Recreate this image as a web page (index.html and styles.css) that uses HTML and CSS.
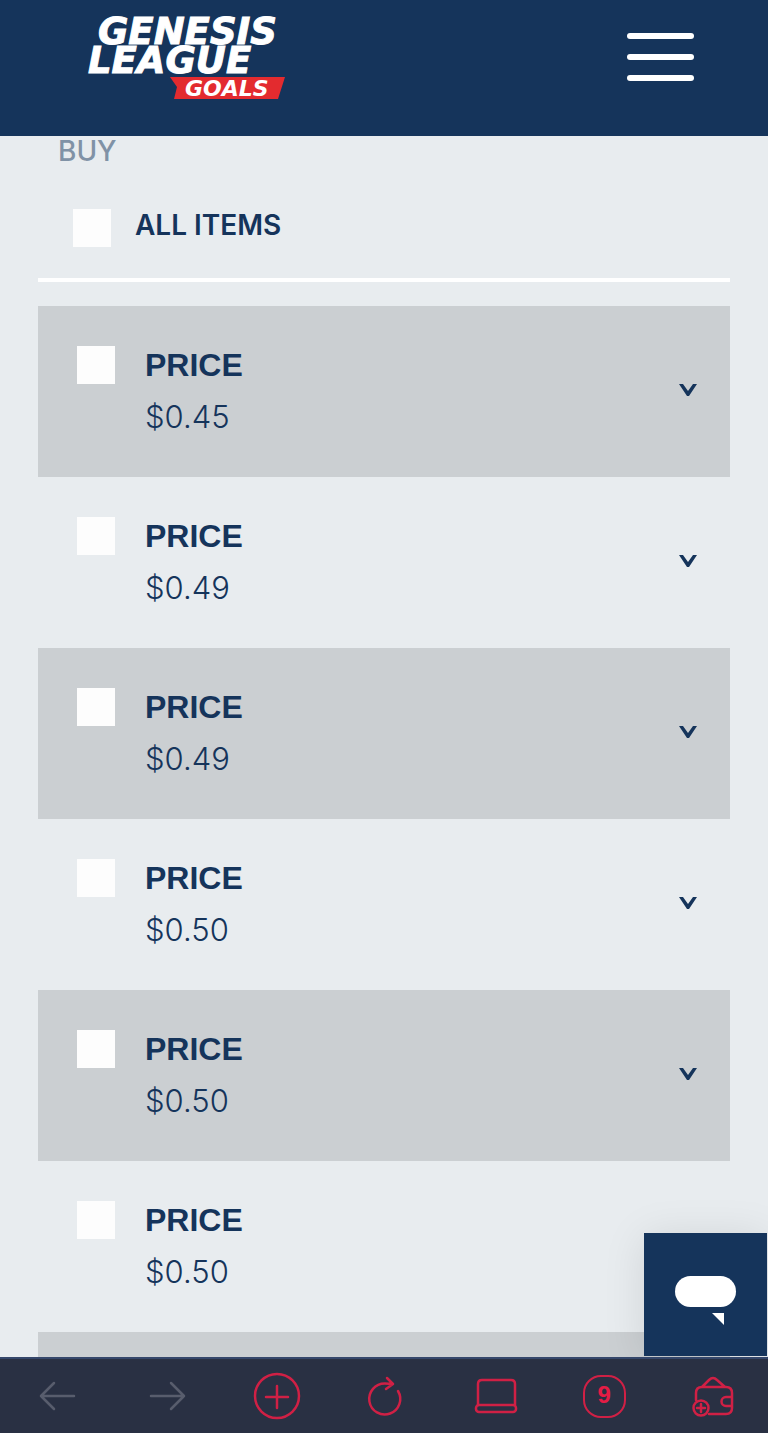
FILE: index.html
```html
<!DOCTYPE html>
<html lang="en">
<head>
    <meta charset="UTF-8">
    <meta name="viewport" content="width=device-width, initial-scale=1.0">
    <title>Genesis League Goals</title>
    <link rel="stylesheet" href="styles.css">
</head>
<body>
<header class="header">
    <a href="#" class="logo" aria-label="Genesis League Goals">
        <svg width="240" height="90" viewBox="0 0 240 90">
            <g class="logo-title">
                <text x="26" y="34">GENESIS</text>
                <text x="16" y="63">LEAGUE</text>
            </g>
            <path fill="#e32b2f" d="M98 67h115l-7 22H102l3-12z"/>
            <text class="logo-tag" x="113" y="86">GOALS</text>
        </svg>
    </a>
    <button class="menu-button" aria-label="Menu">
        <span></span>
        <span></span>
        <span></span>
    </button>
</header>

<main class="content">
    <h2 class="section-title">BUY</h2>
    <div class="all-items">
        <input type="checkbox" class="check" id="all">
        <label for="all">ALL ITEMS</label>
    </div>

    <ul class="items">
        <li class="item">
            <input type="checkbox" class="check" id="item1">
            <label for="item1"><strong>PRICE</strong><span>$0.45</span></label>
            <button class="expand" aria-label="Expand"><svg width="20" height="14" viewBox="0 0 20 14"><path d="M1 1h4l5 7 5-7h4l-8 12h-2z"/></svg></button>
        </li>
        <li class="item">
            <input type="checkbox" class="check" id="item2">
            <label for="item2"><strong>PRICE</strong><span>$0.49</span></label>
            <button class="expand" aria-label="Expand"><svg width="20" height="14" viewBox="0 0 20 14"><path d="M1 1h4l5 7 5-7h4l-8 12h-2z"/></svg></button>
        </li>
        <li class="item">
            <input type="checkbox" class="check" id="item3">
            <label for="item3"><strong>PRICE</strong><span>$0.49</span></label>
            <button class="expand" aria-label="Expand"><svg width="20" height="14" viewBox="0 0 20 14"><path d="M1 1h4l5 7 5-7h4l-8 12h-2z"/></svg></button>
        </li>
        <li class="item">
            <input type="checkbox" class="check" id="item4">
            <label for="item4"><strong>PRICE</strong><span>$0.50</span></label>
            <button class="expand" aria-label="Expand"><svg width="20" height="14" viewBox="0 0 20 14"><path d="M1 1h4l5 7 5-7h4l-8 12h-2z"/></svg></button>
        </li>
        <li class="item">
            <input type="checkbox" class="check" id="item5">
            <label for="item5"><strong>PRICE</strong><span>$0.50</span></label>
            <button class="expand" aria-label="Expand"><svg width="20" height="14" viewBox="0 0 20 14"><path d="M1 1h4l5 7 5-7h4l-8 12h-2z"/></svg></button>
        </li>
        <li class="item">
            <input type="checkbox" class="check" id="item6">
            <label for="item6"><strong>PRICE</strong><span>$0.50</span></label>
        </li>
        <li class="item"></li>
    </ul>

    <button class="chat-button" aria-label="Chat">
        <svg width="62" height="50" viewBox="0 0 62 50">
            <rect x="0" y="0" width="61" height="31" rx="15.5"/>
            <path d="M37 37h12v12z"/>
        </svg>
    </button>
</main>

<nav class="toolbar">
    <button class="muted" aria-label="Back">
        <svg width="48" height="48" viewBox="0 0 48 48"><path d="M39 24H6M19 11L6 24l13 13"/></svg>
    </button>
    <button class="muted" aria-label="Forward">
        <svg width="48" height="48" viewBox="0 0 48 48"><path d="M7 24h33M27 11l13 13-13 13"/></svg>
    </button>
    <button aria-label="New tab">
        <svg width="48" height="48" viewBox="0 0 48 48"><circle cx="24" cy="24" r="22"/><path d="M24 14v22M13 25h22"/></svg>
    </button>
    <button aria-label="Reload">
        <svg width="48" height="48" viewBox="0 0 48 48"><path d="M36 19A15.500 15.500 0 1 1 23 11.500l8 .5M25 6l6 6-7 5"/></svg>
    </button>
    <button aria-label="Desktop site">
        <svg width="48" height="48" viewBox="0 0 48 48"><path d="M7 33V12q0-4 4-4h29q4 0 4 4v21"/><rect x="5" y="33" width="40" height="7" rx="3"/></svg>
    </button>
    <button class="tabs" aria-label="Tabs"><span>9</span></button>
    <button aria-label="Wallet">
        <svg width="48" height="48" viewBox="0 0 48 48">
            <path d="M7 28v-7q0-6 6-6h24q6 0 6 6v4M43 34v2q0 6-6 6H20M13 15l7-7q4-4 8 0l8 7M43 25h-6a4.500 4.500 0 0 0 0 9h6z"/>
            <circle cx="12" cy="36" r="7.500"/>
            <path d="M12 32v8M8 36h8"/>
        </svg>
    </button>
</nav>
</body>
</html>
```
FILE: styles.css
```css
* {
    box-sizing: border-box;
}
body {
    margin: 0;
    height: 100vh;
    display: flex;
    flex-direction: column;
    font-family: Inter, 'Liberation Sans', sans-serif;
    background: #e8ecef;
    color: #15345b;
}
button {
    padding: 0;
    border: none;
    background: none;
    cursor: pointer;
}
svg {
    display: block;
}
.header {
    flex: none;
    display: flex;
    justify-content: space-between;
    align-items: flex-start;
    height: 136px;
    padding: 10px 72px;
    background: #15345b;
}
.logo svg {
    overflow: visible;
}
.logo-title {
    font: italic bold 37px 'DejaVu Sans', sans-serif;
    fill: #fff;
    stroke: #fff;
    stroke-width: 1px;
}
.logo-tag {
    font: italic bold 22px 'DejaVu Sans', sans-serif;
    fill: #fff;
}
.menu-button {
    display: flex;
    flex-direction: column;
    gap: 15px;
    padding: 23px 2px;
}
.menu-button span {
    width: 67px;
    height: 6px;
    border-radius: 3px;
    background: #fff;
}
.content {
    position: relative;
    flex: 1;
    min-height: 0;
    overflow: hidden;
    padding: 0 38px;
}
.section-title {
    margin: 0;
    padding-left: 20px;
    font-size: 28px;
    font-weight: 500;
    line-height: 30px;
    color: #8092a6;
}
.all-items {
    display: flex;
    gap: 24px;
    height: 116px;
    padding: 43px 35px 0;
    border-bottom: 4px solid #fff;
    font-size: 28px;
    font-weight: 600;
    line-height: 32px;
}
.check {
    appearance: none;
    flex: none;
    width: 38px;
    height: 38px;
    margin: 0;
    background: #fdfdfd;
}
.items {
    list-style: none;
    margin: 24px 0 0;
    padding: 0;
}
.item {
    display: flex;
    align-items: flex-start;
    height: 171px;
    padding: 40px 32px 0 39px;
}
.item:nth-child(odd) {
    background: #cbcfd2;
}
.item label {
    flex: 1;
    display: flex;
    flex-direction: column;
    gap: 14px;
    padding-left: 30px;
    font-size: 31px;
    line-height: 38px;
}
.item strong {
    font-family: 'Liberation Sans', sans-serif;
    font-size: 32px;
    font-weight: 700;
}
.item label span {
    font-weight: 350;
}
.expand {
    margin-top: 37px;
    fill: #15345b;
}
.chat-button {
    position: absolute;
    right: 1px;
    bottom: 1px;
    display: flex;
    justify-content: center;
    align-items: center;
    width: 123px;
    height: 123px;
    padding-top: 12px;
    background: #15345b;
    fill: #fff;
    box-shadow: 0 4px 40px rgba(0, 0, 0, 0.1);
}
.toolbar {
    flex: none;
    display: grid;
    grid-template-columns: repeat(7, 1fr);
    height: 76px;
    padding-left: 4px;
    border-top: 2px solid #35476b;
    background: #293043;
}
.toolbar button {
    display: flex;
    justify-content: center;
    align-items: center;
}
.toolbar svg {
    fill: none;
    stroke: #d02045;
    stroke-width: 2.5;
    stroke-linecap: round;
    stroke-linejoin: round;
}
.toolbar .muted svg {
    stroke: #585d6d;
}
.tabs span {
    width: 43px;
    height: 43px;
    border: 2px solid #d02045;
    border-radius: 18px;
    font: bold 24px/36px 'Liberation Sans', sans-serif;
    color: #e51c45;
}
```
